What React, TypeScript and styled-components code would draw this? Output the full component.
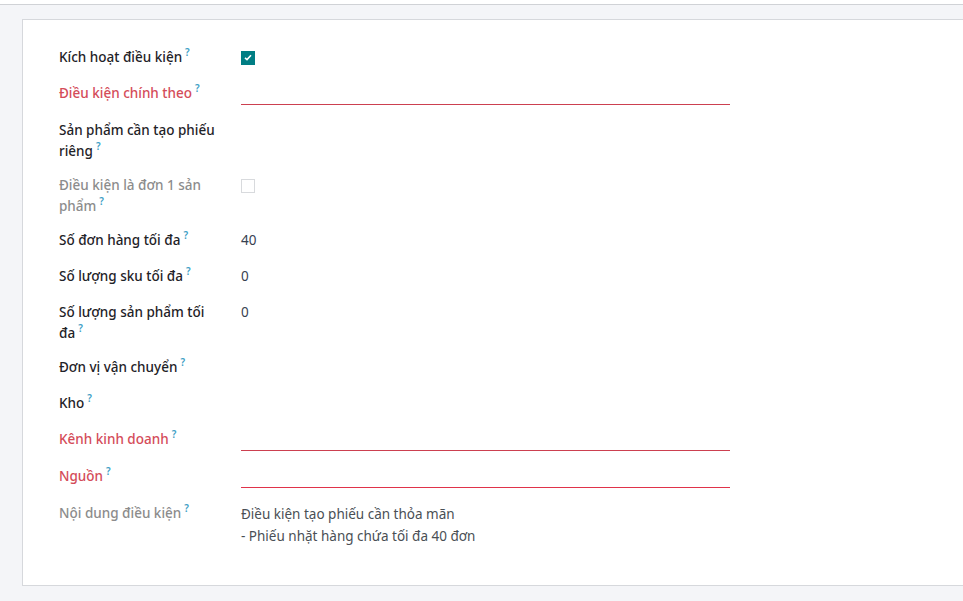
import React from "react";
import styled, { createGlobalStyle } from "styled-components";

const Global = createGlobalStyle`
  html, body { margin: 0; padding: 0; background: #f4f5f8; }
  body { font-family: "Noto Sans", "Liberation Sans", sans-serif; font-size: 13.5px; color: #212529; overflow: hidden; }
`;

const Page = styled.div`
  width: 963px;
  height: 601px;
  overflow: hidden;
  display: flex;
  flex-direction: column;
  background: #f4f5f8;
`;

const TopStrip = styled.div`
  height: 4px;
  background: #fff;
  border-bottom: 1px solid #d0d2d6;
  flex: none;
`;

const Sheet = styled.div`
  padding: 14px 0 0 22px;
  flex: none;
`;

const Card = styled.div`
  width: 980px;
  box-sizing: border-box;
  background: #fff;
  border: 1px solid #d6d8dc;
  padding: 27px 0 38px 36px;
`;

const FormGrid = styled.div`
  display: grid;
  grid-template-columns: 182px 489px;
  align-items: start;
`;

type Tone = "normal" | "danger" | "muted";

const Label = styled.div<{ $tone?: Tone }>`
  font-weight: 500;
  line-height: 21px;
  min-height: 36px;
  box-sizing: border-box;
  padding: 0 16px 13px 0;
  color: ${(p) =>
    p.$tone === "danger" ? "#d44c59" : p.$tone === "muted" ? "#8c8c8c" : "#1f2328"};
`;

const Help = styled.sup`
  color: #3f9fc6;
  font-size: 10px;
  font-weight: 600;
  line-height: 0;
  margin-left: 3px;
  vertical-align: top;
  position: relative;
  top: 5px;
`;

const Value = styled.div`
  line-height: 21px;
  min-height: 21px;
  color: #374151;
`;

const Underline = styled.div<{ $color: string }>`
  height: 21px;
  margin-bottom: 15px;
  border-bottom: 1px solid ${(p) => p.$color};
`;

const CheckCell = styled.div`
  height: 21px;
  display: flex;
  align-items: center;
`;

const Checkbox = styled.span<{ $checked?: boolean }>`
  width: 14px;
  height: 14px;
  box-sizing: border-box;
  display: inline-flex;
  align-items: center;
  justify-content: center;
  background: ${(p) => (p.$checked ? "#017e84" : "#fff")};
  border: 1px solid ${(p) => (p.$checked ? "#017e84" : "#d8dadd")};
`;

const Note = styled.div`
  line-height: 22px;
  color: #4a4f55;
`;

const Q = () => <Help>?</Help>;

export default function App() {
  return (
    <Page>
      <Global />
      <TopStrip />
      <Sheet>
        <Card>
          <FormGrid>
            <Label>Kích hoạt điều kiện<Q /></Label>
            <CheckCell>
              <Checkbox $checked>
                <svg width="8" height="7" viewBox="0 0 8 7">
                  <path d="M1 3.8 L3 5.6 L7 1.2" stroke="#fff" strokeWidth="1.6" fill="none" />
                </svg>
              </Checkbox>
            </CheckCell>

            <Label $tone="danger">Điều kiện chính theo<Q /></Label>
            <Underline $color="#cc4050" />

            <Label>Sản phẩm cần tạo phiếu riêng<Q /></Label>
            <Value />

            <Label $tone="muted">Điều kiện là đơn 1 sản phẩm<Q /></Label>
            <CheckCell>
              <Checkbox />
            </CheckCell>

            <Label>Số đơn hàng tối đa<Q /></Label>
            <Value>40</Value>

            <Label>Số lượng sku tối đa<Q /></Label>
            <Value>0</Value>

            <Label>Số lượng sản phẩm tối đa<Q /></Label>
            <Value>0</Value>

            <Label>Đơn vị vận chuyển<Q /></Label>
            <Value />

            <Label>Kho<Q /></Label>
            <Value />

            <Label $tone="danger">Kênh kinh doanh<Q /></Label>
            <Underline $color="#cc4050" />

            <Label $tone="danger">Nguồn<Q /></Label>
            <Underline $color="#e0334a" />

            <Label $tone="muted">Nội dung điều kiện<Q /></Label>
            <Note>
              Điều kiện tạo phiếu cần thỏa mãn
              <br />- Phiếu nhặt hàng chứa tối đa 40 đơn
            </Note>
          </FormGrid>
        </Card>
      </Sheet>
    </Page>
  );
}
